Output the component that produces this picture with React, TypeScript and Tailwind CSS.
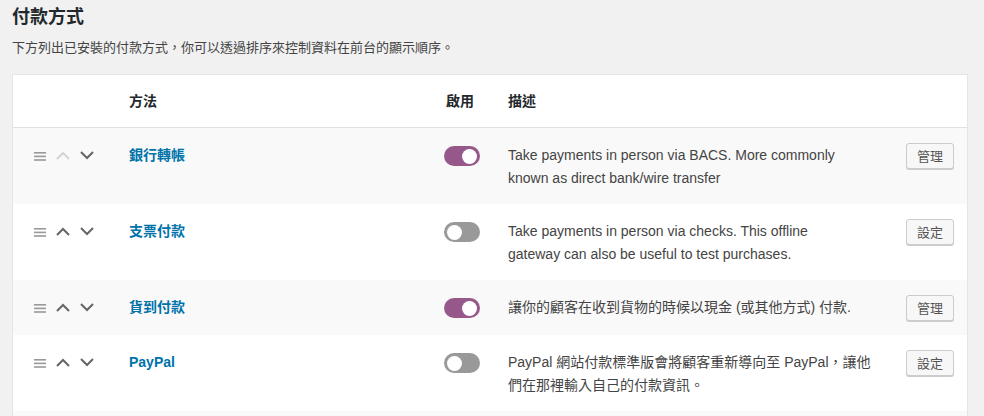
import React from 'react';

type Gateway = {
  name: string;
  enabled: boolean;
  desc: string[];
  action: string;
  firstRow?: boolean;
};

const gateways: Gateway[] = [
  {
    name: '銀行轉帳',
    enabled: true,
    desc: ['Take payments in person via BACS. More commonly', 'known as direct bank/wire transfer'],
    action: '管理',
    firstRow: true,
  },
  {
    name: '支票付款',
    enabled: false,
    desc: ['Take payments in person via checks. This offline', 'gateway can also be useful to test purchases.'],
    action: '設定',
  },
  {
    name: '貨到付款',
    enabled: true,
    desc: ['讓你的顧客在收到貨物的時候以現金 (或其他方式) 付款.'],
    action: '管理',
  },
  {
    name: 'PayPal',
    enabled: false,
    desc: ['PayPal 網站付款標準版會將顧客重新導向至 PayPal，讓他', '們在那裡輸入自己的付款資訊。'],
    action: '設定',
  },
];

function Handle() {
  return (
    <svg width="12" height="10" viewBox="0 0 12 10" className="text-[#999]">
      <rect x="0" y="1" width="12" height="1.6" fill="currentColor" />
      <rect x="0" y="4.6" width="12" height="1.6" fill="currentColor" />
      <rect x="0" y="8.2" width="12" height="1.6" fill="currentColor" />
    </svg>
  );
}

function Chevron({ up, disabled }: { up?: boolean; disabled?: boolean }) {
  return (
    <svg width="14" height="9" viewBox="0 0 14 9" className={disabled ? 'text-[#d4d4d4]' : 'text-[#666]'}>
      <polyline
        points={up ? '1,8 7,2 13,8' : '1,1 7,7 13,1'}
        fill="none"
        stroke="currentColor"
        strokeWidth="2"
      />
    </svg>
  );
}

function Toggle({ on }: { on: boolean }) {
  return (
    <div
      className={`mt-[2px] flex h-[20px] w-[36px] items-center rounded-full px-[3px] ${
        on ? 'justify-end bg-[#96588a]' : 'justify-start bg-[#999]'
      }`}
    >
      <div className="h-[15px] w-[15px] rounded-full bg-white" />
    </div>
  );
}

export default function App() {
  return (
    <div
      className="min-h-screen bg-[#f1f1f1] pl-3 pr-4 text-[#444]"
      style={{ fontFamily: '"Liberation Sans", "Noto Sans CJK TC", sans-serif' }}
    >
      <h2 className="pt-[5px] text-[18px] leading-[24px] font-semibold text-[#23282d]">付款方式</h2>
      <p className="mt-[9px] mb-[16px] text-[13px] leading-[20px]">
        下方列出已安裝的付款方式，你可以透過排序來控制資料在前台的顯示順序。
      </p>

      <div className="border border-[#e5e5e5] bg-white text-[14px] leading-[23px]">
        <div className="grid h-[53px] grid-cols-[116px_315px_64px_398px_1fr] items-center border-b border-[#e1e1e1] font-semibold text-[#23282d]">
          <div />
          <div>方法</div>
          <div className="pl-[2px]">啟用</div>
          <div>描述</div>
          <div />
        </div>

        {gateways.map((g, i) => (
          <div
            key={g.name}
            className={`grid grid-cols-[116px_315px_64px_398px_1fr] items-start pt-[16px] pb-[14px] ${
              i % 2 === 0 ? 'bg-[#f9f9f9]' : 'bg-white'
            }`}
          >
            <div className="flex h-[23px] items-center gap-[10px] pl-[21px]">
              <Handle />
              <Chevron up disabled={g.firstRow} />
              <Chevron />
            </div>
            <div className="font-bold text-[#0073aa]">{g.name}</div>
            <div>
              <Toggle on={g.enabled} />
            </div>
            <div className="whitespace-nowrap">
              {g.desc.map((line) => (
                <div key={line}>{line}</div>
              ))}
            </div>
            <div className="-mt-[1px]">
              <button className="flex h-[26px] items-center rounded-[3px] border border-[#ccc] bg-[#f7f7f7] px-[10px] text-[13px] text-[#555] shadow-[0_1px_0_#ccc]">
                {g.action}
              </button>
            </div>
          </div>
        ))}
        <div className="h-[60px] bg-[#f9f9f9]" />
      </div>
    </div>
  );
}
